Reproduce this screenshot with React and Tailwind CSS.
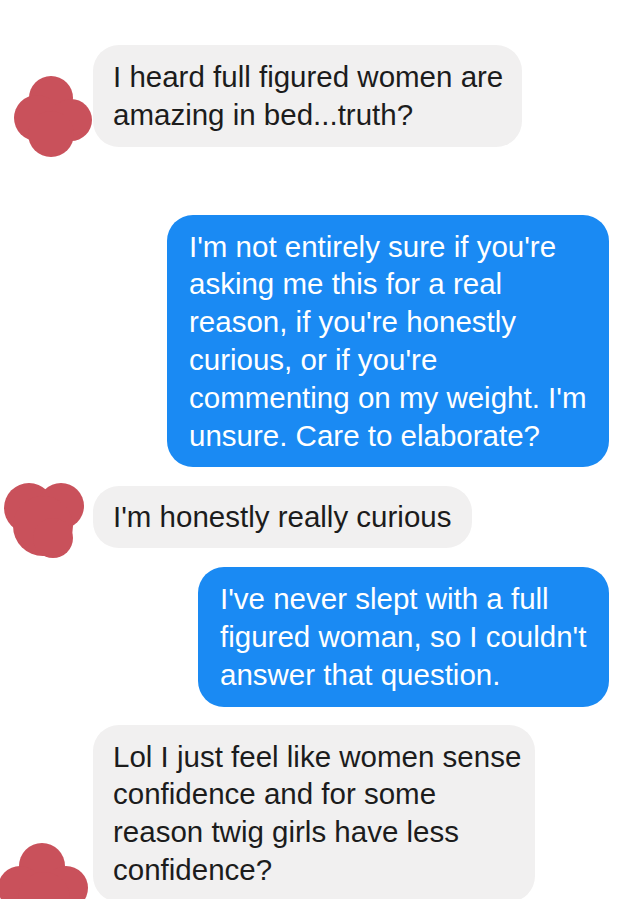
import React from 'react';

// Burbuja de mensaje (gris = recibido, azul = enviado)
const Bubble = ({ lines, sent, className }) => (
    <div
        className={
            (sent ? 'bg-[#1a8af3] text-white ' : 'bg-[#f1f0f0] text-[#1c1c1c] ') +
            'rounded-[26px] py-[13px] text-[29.5px] leading-[37.8px] ' +
            className
        }
    >
        {lines.map((l, i) => (
            <span key={i} className="block whitespace-nowrap">{l}</span>
        ))}
    </div>
);

// Manchas rojas que tapan las fotos de perfil
const BlobOne = () => (
    <svg width="80" height="84" viewBox="0 0 80 84" className="shrink-0">
        <g fill="#c9515b">
            <circle cx="38" cy="24" r="22" />
            <circle cx="24" cy="44" r="23" />
            <circle cx="58" cy="46" r="21" />
            <circle cx="38" cy="60" r="23" />
        </g>
    </svg>
);

const BlobTwo = () => (
    <svg width="82" height="78" viewBox="0 0 82 78" className="shrink-0">
        <g fill="#c9515b">
            <circle cx="26" cy="26" r="25" />
            <circle cx="58" cy="24" r="23" />
            <circle cx="40" cy="44" r="30" />
            <circle cx="50" cy="56" r="20" />
        </g>
    </svg>
);

const BlobThree = () => (
    <svg width="88" height="64" viewBox="0 0 88 64" className="shrink-0">
        <g fill="#c9515b">
            <circle cx="42" cy="24" r="23" />
            <circle cx="20" cy="46" r="22" />
            <circle cx="66" cy="46" r="22" />
            <circle cx="44" cy="56" r="26" />
        </g>
    </svg>
);

function App() {
    return (
        <div className="w-[640px] h-[899px] overflow-hidden bg-white font-['Liberation_Sans',Arial,sans-serif]">
            {/* Mensaje 1 */}
            <div className="flex items-end pt-[45px]">
                <div className="w-[93px] shrink-0 pl-[13px] -mb-[11px]">
                    <BlobOne />
                </div>
                <Bubble
                    className="w-[429px] px-[20px]"
                    lines={['I heard full figured women are', 'amazing in bed...truth?']}
                />
            </div>

            {/* Mensaje 2 */}
            <div className="flex justify-end pr-[31px] mt-[68px]">
                <Bubble
                    sent
                    className="w-[442px] px-[22px]"
                    lines={[
                        "I'm not entirely sure if you're",
                        'asking me this for a real',
                        "reason, if you're honestly",
                        "curious, or if you're",
                        "commenting on my weight. I'm",
                        'unsure. Care to elaborate?',
                    ]}
                />
            </div>

            {/* Mensaje 3 */}
            <div className="flex items-start mt-[19px]">
                <div className="w-[93px] h-[62px] shrink-0 pl-[3px] -mt-[4px]">
                    <BlobTwo />
                </div>
                <Bubble
                    className="w-[379px] px-[20px] !py-[12px]"
                    lines={["I'm honestly really curious"]}
                />
            </div>

            {/* Mensaje 4 */}
            <div className="flex justify-end pr-[31px] mt-[19px]">
                <Bubble
                    sent
                    className="w-[411px] px-[22px] !py-[13px]"
                    lines={["I've never slept with a full", "figured woman, so I couldn't", 'answer that question.']}
                />
            </div>

            {/* Mensaje 5 */}
            <div className="flex items-end mt-[18px]">
                <div className="w-[93px] shrink-0 -mb-[4px]">
                    <BlobThree />
                </div>
                <Bubble
                    className="w-[442px] px-[20px]"
                    lines={[
                        'Lol I just feel like women sense',
                        'confidence and for some',
                        'reason twig girls have less',
                        'confidence?',
                    ]}
                />
            </div>
        </div>
    );
}

export default App;
